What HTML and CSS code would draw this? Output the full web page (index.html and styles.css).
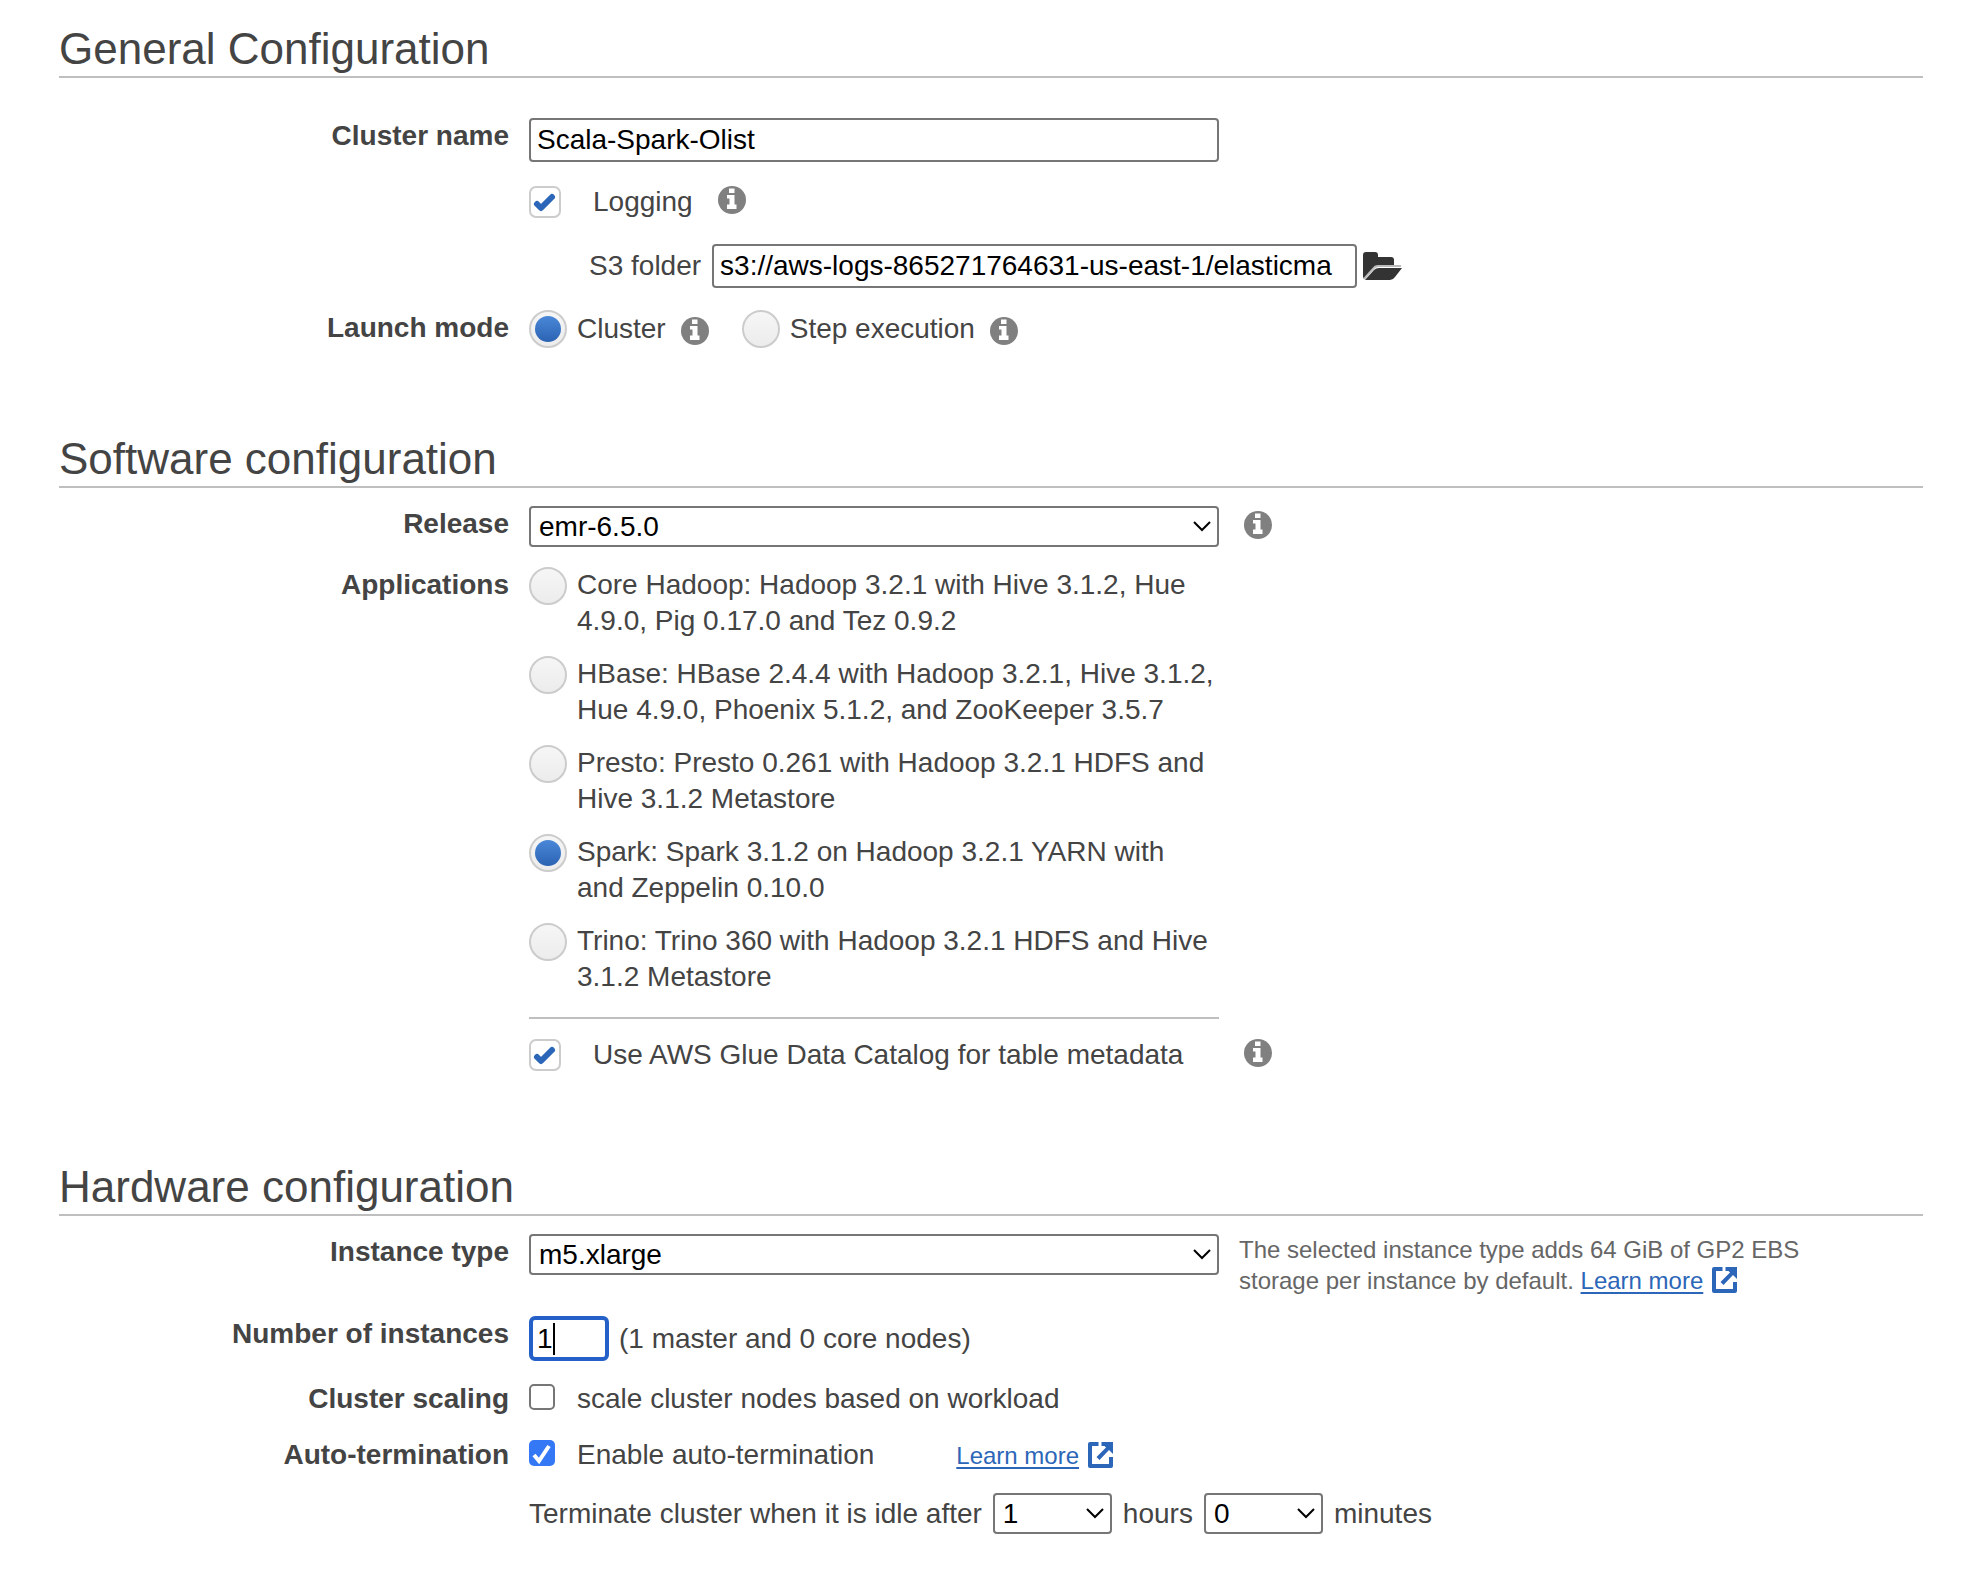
FILE: index.html
```html
<!DOCTYPE html>
<html lang="en">
<head>
<meta charset="utf-8">
<title>Create Cluster</title>
<link rel="stylesheet" href="styles.css">
</head>
<body>
<svg class="defs" aria-hidden="true">
  <symbol id="info" viewBox="0 0 28 28">
    <circle cx="14" cy="14" r="14" fill="#808080"/>
    <path fill="#fff" d="M11 2.5h5.5V7H11zM9 9h7.500v9.500h2v4.500H9v-4.500h2.500v-6H9z"/>
  </symbol>
  <symbol id="external" viewBox="0 0 26 26">
    <path fill="#2c66b8" d="M2 0h8.500v4H4v18h17v-7h4v9a2 2 0 0 1-2 2H2a2 2 0 0 1-2-2V2a2 2 0 0 1 2-2zM13.500 0H25v12l-4-4-9.500 10L8.500 15 18 5.500 16.500 4h-3z"/>
  </symbol>
</svg>
<form class="page">
  <section>
    <h1>General Configuration</h1>
    <div class="fields fields-spaced">
      <div class="row">
        <label class="name" for="cluster">Cluster name</label>
        <input class="text wide" id="cluster" type="text" value="Scala-Spark-Olist">
      </div>
      <div class="row">
        <span></span>
        <div class="stack">
          <div class="line">
            <input class="tick" type="checkbox" id="logging" checked>
            <label class="tick-label" for="logging">Logging</label>
            <svg class="info raised"><use href="#info"/></svg>
          </div>
          <div class="line folder-line">
            <label for="folder">S3 folder</label>
            <input class="text folder-input" id="folder" type="text" value="s3://aws-logs-865271764631-us-east-1/elasticma">
            <button class="browse" type="button" aria-label="Browse"><svg viewBox="0 0 39 30"><path fill="#333" d="M0 26V4q0-3 3-3h9q3 0 3 3v2h13q3 0 3 3v6H12L1 28z"/><path fill="none" stroke="#bbb" stroke-width="2" d="M1 28l9-10q2-3 5-3h23"/><path fill="#333" d="M2 29l9-10q2-2 5-2h23l-7 9q-2 3-5 3z"/></svg></button>
          </div>
        </div>
      </div>
      <div class="row">
        <span class="name">Launch mode</span>
        <div class="line">
          <input class="dot" type="radio" name="mode" id="mode-cluster" checked>
          <label class="dot-label" for="mode-cluster">Cluster</label>
          <svg class="info mode-info"><use href="#info"/></svg>
          <input class="dot second" type="radio" name="mode" id="mode-step">
          <label class="dot-label" for="mode-step">Step execution</label>
          <svg class="info mode-info"><use href="#info"/></svg>
        </div>
      </div>
    </div>
  </section>

  <section class="software">
    <h1>Software configuration</h1>
    <div class="fields">
      <div class="row">
        <label class="name" for="release">Release</label>
        <div class="line">
          <select class="wide" id="release"><option>emr-6.5.0</option></select>
          <svg class="info raised"><use href="#info"/></svg>
        </div>
      </div>
      <div class="row">
        <span class="name">Applications</span>
        <div>
          <div class="apps wide">
            <div class="app"><input class="dot" type="radio" name="app" id="core"><label for="core">Core Hadoop: Hadoop 3.2.1 with Hive 3.1.2, Hue 4.9.0, Pig 0.17.0 and Tez 0.9.2</label></div>
            <div class="app"><input class="dot" type="radio" name="app" id="hbase"><label for="hbase">HBase: HBase 2.4.4 with Hadoop 3.2.1, Hive 3.1.2, Hue 4.9.0, Phoenix 5.1.2, and ZooKeeper 3.5.7</label></div>
            <div class="app"><input class="dot" type="radio" name="app" id="presto"><label for="presto">Presto: Presto 0.261 with Hadoop 3.2.1 HDFS and Hive 3.1.2 Metastore</label></div>
            <div class="app"><input class="dot" type="radio" name="app" id="spark" checked><label for="spark">Spark: Spark 3.1.2 on Hadoop 3.2.1 YARN with and Zeppelin 0.10.0</label></div>
            <div class="app"><input class="dot" type="radio" name="app" id="trino"><label for="trino">Trino: Trino 360 with Hadoop 3.2.1 HDFS and Hive 3.1.2 Metastore</label></div>
          </div>
          <div class="line">
            <div class="line wide">
              <input class="tick" type="checkbox" id="glue" checked>
              <label class="tick-label" for="glue">Use AWS Glue Data Catalog for table metadata</label>
            </div>
            <svg class="info raised"><use href="#info"/></svg>
          </div>
        </div>
      </div>
    </div>
  </section>

  <section>
    <h1>Hardware configuration</h1>
    <div class="fields">
      <div class="row">
        <label class="name" for="instance">Instance type</label>
        <div class="line top">
          <select class="wide" id="instance"><option>m5.xlarge</option></select>
          <p class="help">The selected instance type adds 64 GiB of GP2 EBS storage per instance by default. <a href="#">Learn more</a> <svg class="external"><use href="#external"/></svg></p>
        </div>
      </div>
      <div class="row">
        <label class="name" for="count">Number of instances</label>
        <div class="line">
          <input class="text count" id="count" type="text" value="1">
          <span>(1 master and 0 core nodes)</span>
        </div>
      </div>
      <div class="row">
        <span class="name">Cluster scaling</span>
        <div class="line">
          <input class="box" type="checkbox" id="scaling">
          <label for="scaling">scale cluster nodes based on workload</label>
        </div>
      </div>
      <div class="row">
        <span class="name">Auto-termination</span>
        <div class="line">
          <input class="box" type="checkbox" id="auto" checked>
          <label for="auto">Enable auto-termination</label>
          <span class="more"><a href="#">Learn more</a> <svg class="external"><use href="#external"/></svg></span>
        </div>
      </div>
      <div class="row">
        <span></span>
        <div class="line idle">
          <label for="hours">Terminate cluster when it is idle after</label>
          <select class="short" id="hours"><option>1</option></select>
          <label for="hours">hours</label>
          <select class="short" id="minutes"><option>0</option></select>
          <label for="minutes">minutes</label>
        </div>
      </div>
    </div>
  </section>
</form>
</body>
</html>
```
FILE: styles.css
```css
* { box-sizing: border-box; }

body {
  margin: 0;
  background: #fff;
  color: #444;
  font: 28px/36px "Liberation Sans", Arial, sans-serif;
}

.defs { display: none; }

.page {
  display: flex;
  flex-direction: column;
  gap: 84px;
  padding: 22px 47px 56px 59px;
}
.software { padding-bottom: 3px; }

h1 {
  margin: 0;
  border-bottom: 2px solid #bfbfbf;
  font-size: 44px;
  line-height: 54px;
  font-weight: 400;
}

.fields {
  display: flex;
  flex-direction: column;
  gap: 20px;
  padding-top: 18px;
}
.fields-spaced { gap: 22px; padding-top: 40px; }

.row {
  display: grid;
  grid-template-columns: 450px minmax(0, 1fr);
  column-gap: 20px;
  align-items: start;
}
.name { font-weight: 700; text-align: right; }

.stack { display: flex; flex-direction: column; gap: 24px; }
.line { display: flex; align-items: center; }
.top { align-items: flex-start; }
.wide { width: 690px; flex: none; }

.text, select {
  margin: 0;
  border: 2px solid #767676;
  border-radius: 4px;
  background: #fff;
  color: #000;
  font: inherit;
}
.text { height: 44px; padding: 0 6px; }

select {
  appearance: none;
  height: 41px;
  padding: 0 8px;
  background: #fff url("data:image/svg+xml,%3Csvg xmlns='http://www.w3.org/2000/svg' width='18' height='11'%3E%3Cpath d='M1 1l8 8 8-8' fill='none' stroke='%23000' stroke-width='2'/%3E%3C/svg%3E") no-repeat right 6px center;
}
.short { width: 119px; }

.tick, .dot, .box { appearance: none; flex: none; margin: 0; }

.tick {
  width: 32px;
  height: 32px;
  border: 2px solid #ccc;
  border-radius: 7px;
}
.tick:checked {
  background: url("data:image/svg+xml,%3Csvg xmlns='http://www.w3.org/2000/svg' width='28' height='28'%3E%3Cpath d='M6 16l4 4L21 9' fill='none' stroke='%232c66b8' stroke-width='6' stroke-linecap='round' stroke-linejoin='round'/%3E%3C/svg%3E") center;
}
.tick-label { margin-left: 32px; }

.dot {
  width: 38px;
  height: 38px;
  border: 2px solid #ccc;
  border-radius: 50%;
  background: linear-gradient(#f6f6f6, #ececec);
}
.dot:checked { padding: 4px; }
.dot:checked::before {
  content: "";
  display: block;
  height: 26px;
  border-radius: 50%;
  background: linear-gradient(#4a87d8, #2c63b3);
}
.dot-label { margin-left: 10px; }
.second { margin-left: 33px; }

.box {
  width: 26px;
  height: 26px;
  margin-right: 22px;
  margin-bottom: 4px;
  border: 2px solid #767676;
  border-radius: 5px;
}
.box:checked {
  border: 0;
  background: #3478f6 url("data:image/svg+xml,%3Csvg xmlns='http://www.w3.org/2000/svg' width='26' height='26'%3E%3Cpath d='M5 15l5 6L20 6' fill='none' stroke='%23fff' stroke-width='4'/%3E%3C/svg%3E") center;
}

.info { flex: none; width: 28px; height: 28px; }
.raised { margin-left: 25px; margin-bottom: 4px; }
.mode-info { margin-left: 15px; margin-top: 4px; }

.folder-line { padding-left: 60px; }
.folder-input { width: 645px; margin-left: 11px; }
.browse {
  width: 39px;
  height: 30px;
  margin-left: 6px;
  padding: 0;
  border: 0;
  background: none;
}
.browse svg { display: block; width: 39px; height: 30px; }

.apps {
  display: flex;
  flex-direction: column;
  gap: 17px;
  margin-bottom: 18px;
  padding-bottom: 22px;
  border-bottom: 2px solid #bfbfbf;
}
.app {
  display: flex;
  gap: 10px;
  align-items: flex-start;
  padding-right: 3px;
}

.help, .more { font-size: 24px; line-height: 31px; }
.help { max-width: 600px; margin: 0 0 0 20px; color: #666; }
.more { margin-left: 82px; }
a { color: #2c66b8; text-underline-offset: 3px; text-decoration-thickness: 2px; }
.external { width: 26px; height: 26px; margin-left: 2px; vertical-align: -4px; }

/* Focused field, with its insertion bar after the first digit */
.count {
  width: 80px;
  height: 45px;
  margin-right: 10px;
  padding: 0 4px;
  border: 4px solid #2560c8;
  border-radius: 6px;
  background: linear-gradient(#000, #000) no-repeat 20px center / 2px 32px;
}

.idle { gap: 11px; }
```
